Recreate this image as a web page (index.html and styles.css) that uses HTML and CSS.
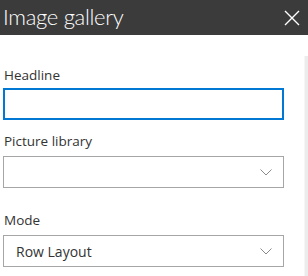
FILE: index.html
```html
<!DOCTYPE html>
<html>
<head>
  <title>Image gallery</title>
  <link rel="stylesheet" href="styles.css">
</head>
<body>
  <div class="panel-header">
    <div class="panel-title">Image gallery</div>
    <button class="close-button" aria-label="Close">
      <svg width="16" height="16" viewBox="0 0 16 16">
        <path d="M1 1 L15 15 M15 1 L1 15" stroke="#fff" stroke-width="1.4" fill="none"/>
      </svg>
    </button>
  </div>

  <div class="panel-body">
    <div class="panel-content">
      <div class="field">
        <label class="field-label">Headline</label>
        <input class="text-input" type="text" />
      </div>

      <div class="field">
        <label class="field-label">Picture library</label>
        <div class="dropdown">
          <span class="dropdown-value"></span>
          <svg class="chevron" width="12" height="7" viewBox="0 0 12 7">
            <path d="M0.5 0.5 L6 6 L11.5 0.5" stroke="#8a8a8a" stroke-width="1" fill="none"/>
          </svg>
        </div>
      </div>

      <div class="field field-mode">
        <label class="field-label">Mode</label>
        <div class="dropdown">
          <span class="dropdown-value">Row Layout</span>
          <svg class="chevron" width="12" height="7" viewBox="0 0 12 7">
            <path d="M0.5 0.5 L6 6 L11.5 0.5" stroke="#8a8a8a" stroke-width="1" fill="none"/>
          </svg>
        </div>
      </div>
    </div>
    <div class="scroll-track"></div>
  </div>
</body>
</html>
```

FILE: styles.css
```css
body {
  font-family: 'Open Sans', 'Noto Sans', sans-serif;
  background-color: #fff;
  color: #333;
  margin: 0;
  padding: 0;
  overflow: hidden;
}

/* Panel header */
.panel-header {
  display: flex;
  justify-content: space-between;
  align-items: center;
  background-color: #3b3b3b;
  height: 35px;
  padding: 0 8px 0 3px;
}

.panel-title {
  color: #fff;
  font-family: 'Lato', 'Open Sans', sans-serif;
  font-size: 22px;
  font-weight: 300;
  letter-spacing: -0.3px;
  margin-top: -2px;
}

.close-button {
  background: none;
  border: none;
  padding: 0;
  width: 16px;
  height: 16px;
  display: flex;
  cursor: pointer;
}

/* Body */
.panel-body {
  display: flex;
}

.panel-content {
  flex: 1;
  padding: 25px 20px 0 3px;
}

.scroll-track {
  width: 3px;
  margin-top: 21px;
  height: 220px;
  background-color: #ececec;
  border-left: 1px solid #f6f6f6;
}

.field {
  margin-bottom: 6px;
}

.field-mode {
  margin-top: 17px;
}

.field-label {
  display: block;
  font-size: 13.5px;
  line-height: 20px;
  padding: 5px 0 5px 1px;
}

.text-input {
  display: block;
  box-sizing: border-box;
  width: 100%;
  height: 32px;
  margin-top: -2px;
  border: 2px solid #0078d4;
  outline: none;
  padding: 0 8px;
  font-family: inherit;
  font-size: 14px;
}

.dropdown {
  box-sizing: border-box;
  height: 32px;
  border: 1px solid #a6a6a6;
  display: flex;
  align-items: center;
  justify-content: space-between;
  padding: 0 11px 0 12px;
}

.dropdown-value {
  font-size: 14px;
  color: #333;
}
```
